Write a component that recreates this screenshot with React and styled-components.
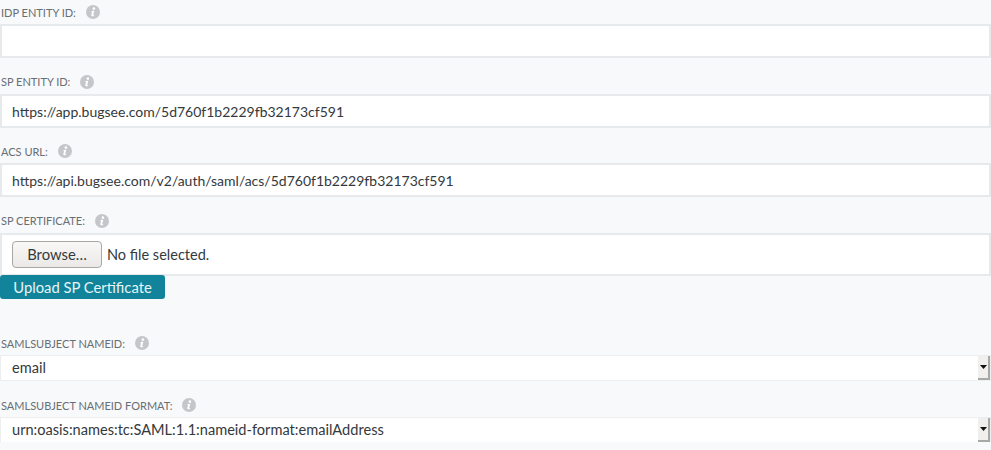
import React from 'react';
import styled, { createGlobalStyle } from 'styled-components';

const GlobalStyle = createGlobalStyle`
    html, body {
        margin: 0;
        padding: 0;
        background: #f8f9fb;
        font-family: "Lato", "Open Sans", sans-serif;
    }
`;

const Info = () => (
    <InfoIcon viewBox="0 0 14 14">
        <circle cx="7" cy="7" r="7" fill="#c4c7c9" />
        <circle cx="7.9" cy="3.6" r="1.3" fill="#fff" />
        <path d="M5.6 6.1 L8.3 5.8 L7.2 10 Q7.1 10.6 8.2 10.2 L8.1 10.9 Q6.9 11.4 6 11.2 Q5 10.9 5.3 10 L6 7.2 L5.5 7 Z" fill="#fff" />
    </InfoIcon>
);

const Arrow = () => (
    <SelectButton>
        <svg width="7" height="4" viewBox="0 0 7 4"><path d="M0 0H7L3.5 4Z" fill="#111" /></svg>
    </SelectButton>
);

function App() {
    return (
        <Form>
            <GlobalStyle />
            <Field>
                <Label>IDP ENTITY ID:<Info /></Label>
                <TextBox />
            </Field>
            <Field>
                <Label>SP ENTITY ID:<Info /></Label>
                <TextBox>https://app.bugsee.com/5d760f1b2229fb32173cf591</TextBox>
            </Field>
            <Field>
                <Label>ACS URL:<Info /></Label>
                <TextBox>https://api.bugsee.com/v2/auth/saml/acs/5d760f1b2229fb32173cf591</TextBox>
            </Field>
            <Field>
                <Label>SP CERTIFICATE:<Info /></Label>
                <FileBox>
                    <Browse type="button">Browse…</Browse>
                    <FileName>No file selected.</FileName>
                </FileBox>
                <Upload type="button">Upload SP Certificate</Upload>
            </Field>
            <SelectField $first>
                <Label>SAMLSUBJECT NAMEID:<Info /></Label>
                <SelectBox>email<Arrow /></SelectBox>
            </SelectField>
            <SelectField>
                <Label>SAMLSUBJECT NAMEID FORMAT:<Info /></Label>
                <SelectBox>urn:oasis:names:tc:SAML:1.1:nameid-format:emailAddress<Arrow /></SelectBox>
            </SelectField>
        </Form>
    );
}

const Form = styled.div`
    width: 991px;
    height: 442px;
    overflow: hidden;
    background: #f8f9fb;
`;

const Field = styled.div`
    margin-bottom: 11.67px;
`;

const SelectField = styled.div`
    margin-top: ${p => (p.$first ? '32.33px' : '0')};
    margin-bottom: 12px;
`;

const Label = styled.div`
    display: flex;
    align-items: center;
    gap: 10px;
    height: 24px;
    padding-left: 1px;
    box-sizing: border-box;
    font-size: 11px;
    color: #686e73;
    white-space: pre;
`;

const InfoIcon = styled.svg`
    width: 14px;
    height: 14px;
    flex: none;
`;

const TextBox = styled.div`
    box-sizing: border-box;
    height: 34px;
    padding: 0 10px;
    line-height: 32px;
    font-size: 14px;
    color: #34393d;
    background: #fff;
    border: 2px solid #e6eaec;
`;

const FileBox = styled.div`
    box-sizing: border-box;
    height: 43px;
    display: flex;
    align-items: center;
    padding: 0 10px;
    background: #fff;
    border: 2px solid #e6eaec;
`;

const Browse = styled.button`
    box-sizing: border-box;
    width: 90px;
    height: 27px;
    padding: 0;
    font: 14.8px "Lato", sans-serif;
    color: #34393d;
    background: linear-gradient(#f9f8f7, #ebe9e7);
    border: 1px solid #a9a7a5;
    border-radius: 4px;
`;

const FileName = styled.span`
    margin-left: 5px;
    font-size: 14.5px;
    color: #34393d;
`;

const Upload = styled.button`
    display: block;
    box-sizing: border-box;
    width: 165px;
    height: 24px;
    margin-top: -1px;
    padding: 0;
    font: 14.8px "Lato", sans-serif;
    color: #e8f4f6;
    background: #11849b;
    border: none;
    border-radius: 3px;
`;

const SelectBox = styled.div`
    position: relative;
    box-sizing: border-box;
    height: 26px;
    padding: 0 11px;
    line-height: 24px;
    font-size: 14.6px;
    color: #34393d;
    background: #fff;
    border: 1px solid #eceef0;
`;

const SelectButton = styled.span`
    position: absolute;
    top: 0;
    right: 0;
    bottom: 0;
    width: 12px;
    display: flex;
    align-items: center;
    justify-content: center;
    box-sizing: border-box;
    background: #f0efee;
    border-right: 2px solid #a8a8a6;
    border-bottom: 2px solid #a8a8a6;
`;

export default App;
